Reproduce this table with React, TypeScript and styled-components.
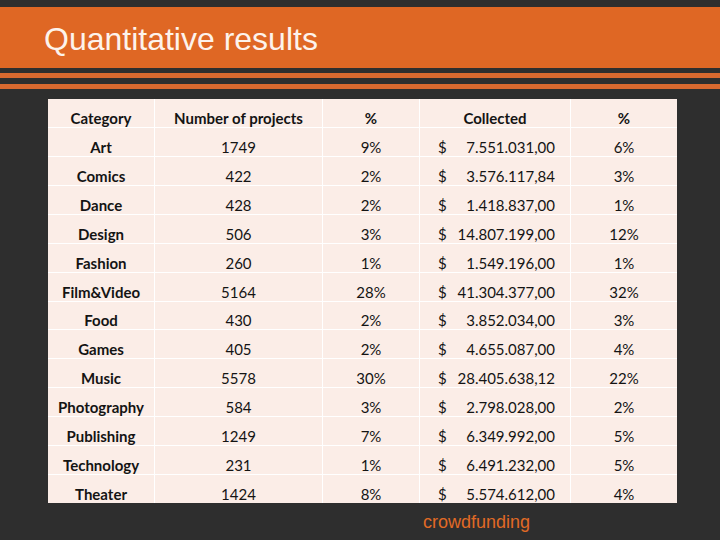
import React from "react";
import styled, { createGlobalStyle } from "styled-components";

const Global = createGlobalStyle`
  html, body { margin: 0; padding: 0; background: #2e2e2e; }
  #root { width: 720px; height: 540px; }
`;

const Page = styled.div`
  width: 720px;
  height: 540px;
  box-sizing: border-box;
  padding-top: 7px;
  background: #2e2e2e;
  overflow: hidden;
`;

const TitleBar = styled.header`
  height: 61px;
  box-sizing: border-box;
  padding: 16px 0 0 44px;
  background: #df6724;
`;

const Title = styled.h1`
  margin: 0;
  font-family: "Liberation Sans", Arial, sans-serif;
  font-weight: 400;
  font-size: 32px;
  line-height: 32px;
  color: #fdf3ec;
`;

const Stripes = styled.div`
  display: flex;
  flex-direction: column;
`;

const Stripe = styled.div<{ $h: number; $orange?: boolean }>`
  height: ${(p) => p.$h}px;
  background: ${(p) => (p.$orange ? "#d9692f" : "#2e2e2e")};
`;

const Table = styled.div`
  margin: 10px 0 0 48px;
  width: 629px;
  height: 404px;
  display: grid;
  grid-template-columns: 106px 167px 96px 150px 106px;
  grid-template-rows: repeat(14, 1fr);
  gap: 1px;
  background: #ffffff;
`;

const Cell = styled.div<{ $bold?: boolean }>`
  background: #fbede7;
  display: flex;
  align-items: flex-end;
  justify-content: center;
  padding-bottom: 0;
  font-family: Lato, "Open Sans", sans-serif;
  font-size: 15px;
  line-height: 18px;
  font-weight: ${(p) => (p.$bold ? 700 : 400)};
  color: #141414;
  white-space: nowrap;
`;

const MoneyCell = styled(Cell)`
  justify-content: space-between;
  padding-left: 18px;
  padding-right: 15px;
`;

const Footer = styled.div`
  margin-top: 9px;
  padding-left: 423px;
  font-family: "Liberation Sans", Arial, sans-serif;
  font-size: 18px;
  line-height: 20px;
  color: #e06a25;
`;

const rows: [string, string, string, string, string][] = [
  ["Art", "1749", "9%", "7.551.031,00", "6%"],
  ["Comics", "422", "2%", "3.576.117,84", "3%"],
  ["Dance", "428", "2%", "1.418.837,00", "1%"],
  ["Design", "506", "3%", "14.807.199,00", "12%"],
  ["Fashion", "260", "1%", "1.549.196,00", "1%"],
  ["Film&Video", "5164", "28%", "41.304.377,00", "32%"],
  ["Food", "430", "2%", "3.852.034,00", "3%"],
  ["Games", "405", "2%", "4.655.087,00", "4%"],
  ["Music", "5578", "30%", "28.405.638,12", "22%"],
  ["Photography", "584", "3%", "2.798.028,00", "2%"],
  ["Publishing", "1249", "7%", "6.349.992,00", "5%"],
  ["Technology", "231", "1%", "6.491.232,00", "5%"],
  ["Theater", "1424", "8%", "5.574.612,00", "4%"],
];

export default function App() {
  return (
    <Page>
      <Global />
      <TitleBar>
        <Title>Quantitative results</Title>
      </TitleBar>
      <Stripes>
        <Stripe $h={5} />
        <Stripe $h={5} $orange />
        <Stripe $h={6} />
        <Stripe $h={5} $orange />
      </Stripes>
      <Table>
        <Cell $bold>Category</Cell>
        <Cell $bold>Number of projects</Cell>
        <Cell $bold>%</Cell>
        <Cell $bold>Collected</Cell>
        <Cell $bold>%</Cell>
        {rows.map((r) => (
          <React.Fragment key={r[0]}>
            <Cell $bold>{r[0]}</Cell>
            <Cell>{r[1]}</Cell>
            <Cell>{r[2]}</Cell>
            <MoneyCell>
              <span>$</span>
              <span>{r[3]}</span>
            </MoneyCell>
            <Cell>{r[4]}</Cell>
          </React.Fragment>
        ))}
      </Table>
      <Footer>crowdfunding</Footer>
    </Page>
  );
}
